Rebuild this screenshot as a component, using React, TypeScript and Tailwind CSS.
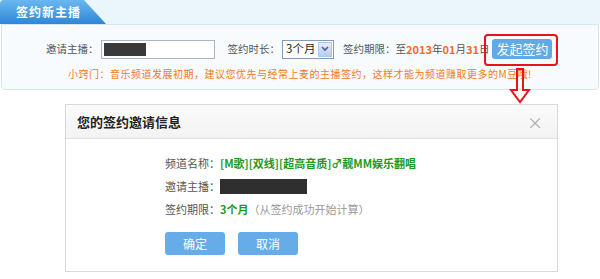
const font = "font-['SimSun','Noto_Sans_CJK_SC',sans-serif]"

const Arrow = () => (
  <svg width="22" height="36" viewBox="0 0 22 36" className="absolute left-[509px] top-[68px]">
    <path d="M8 1 H14 V22 H20 L11 34 L2 22 H8 Z" fill="none" stroke="#e8141b" strokeWidth="2" strokeLinejoin="miter" />
  </svg>
)

const App = () => {
  return (
    <div className={`relative w-[600px] h-[279px] bg-white text-[11px] text-[#555] ${font}`}>
      {/* header with tab */}
      <div className="h-[24px] bg-[#eaf5fc] flex">
        <div className="w-[106px] h-[24px] rounded-tl-[4px] bg-gradient-to-b from-[#6bb8ef] to-[#2c86d8] [clip-path:polygon(0_0,84px_0,106px_24px,0_24px)] flex items-center pl-[16px]">
          <span className="text-white font-bold text-[12px] tracking-[1px]">签约新主播</span>
        </div>
      </div>

      {/* form panel */}
      <div className="mx-[1px] h-[66px] border border-[#d5e6f3] rounded-b-[4px] bg-[#f8fbfe] pt-[13px] text-[10.5px]">
        <div className="flex items-center h-[22px] pl-[44px]">
          <span>邀请主播：</span>
          <div className="ml-[2px] w-[114px] h-[19px] border border-[#abb4bd] bg-white flex items-center pl-[2px]">
            <div className="w-[42px] h-[13px] bg-[#3a3a3a]" />
          </div>
          <span className="ml-[13px]">签约时长：</span>
          <div className="ml-[2px] w-[52px] h-[19px] border border-[#7f9db9] bg-white flex items-center justify-between pl-[3px] pr-[1px]">
            <span className="text-[#222] text-[11.5px]">3个月</span>
            <div className="w-[14px] h-[15px] bg-gradient-to-b from-[#e4eefc] to-[#b7cdf0] border border-[#b0c4e8] flex items-center justify-center">
              <svg width="8" height="6" viewBox="0 0 8 6"><path d="M1 1 L4 4 L7 1" fill="none" stroke="#4d6185" strokeWidth="1.6" /></svg>
            </div>
          </div>
          <span className="ml-[9px]">签约期限：至</span>
          <span className="font-bold text-[#f26c1f] text-[11px]">2013</span>
          <span>年</span>
          <span className="font-bold text-[#f26c1f] text-[11px]">01</span>
          <span>月</span>
          <span className="font-bold text-[#f26c1f] text-[11px]">31</span>
          <span>日</span>
          <div className="relative ml-[3px]">
            <button className="w-[60px] h-[20px] rounded-[3px] bg-[#62a9e6] text-white text-[13px] flex items-center justify-center">发起签约</button>
            <div className="absolute -left-[8px] -top-[5px] w-[74px] h-[32px] border-2 border-[#e8141b] rounded-[4px]" />
          </div>
        </div>
        <div className="mt-[6px] pl-[66px] text-[#f47a21] text-[10px] tracking-[0.5px]">
          小窍门：音乐频道发展初期，建议您优先与经常上麦的主播签约，这样才能为频道赚取更多的M豆哦!
        </div>
      </div>

      <Arrow />

      {/* dialog */}
      <div className="ml-[65px] mt-[14px] w-[493px] h-[168px] border border-[#d9d9d9] bg-white">
        <div className="h-[34px] border-b border-[#e2e2e2] bg-gradient-to-b from-[#fbfbfb] to-[#f3f3f3] flex items-center justify-between pl-[11px] pr-[14px]">
          <span className="text-[13px] font-bold text-[#222]">您的签约邀请信息</span>
          <span className="text-[#aaa] text-[16px] leading-none">×</span>
        </div>
        <div className="pl-[99px] pt-[13px] flex flex-col">
          <div className="h-[23px] flex items-center">
            <span>频道名称：</span>
            <span className="text-[#1c9a1c] font-bold">[M歌][双线][超高音质]♂靓MM娱乐翻唱</span>
          </div>
          <div className="h-[23px] flex items-center">
            <span>邀请主播：</span>
            <div className="w-[87px] h-[15px] bg-[#2f2f2f]" />
          </div>
          <div className="h-[23px] flex items-center">
            <span>签约期限：</span>
            <span className="text-[#1c9a1c] font-bold">3个月</span>
            <span className="text-[#999]">（从签约成功开始计算）</span>
          </div>
          <div className="flex gap-[13px] mt-[11px]">
            <button className="w-[60px] h-[23px] rounded-[3px] bg-[#65ace8] text-white text-[12px]">确定</button>
            <button className="w-[60px] h-[23px] rounded-[3px] bg-[#65ace8] text-white text-[12px]">取消</button>
          </div>
        </div>
      </div>
    </div>
  )
}

export default App
